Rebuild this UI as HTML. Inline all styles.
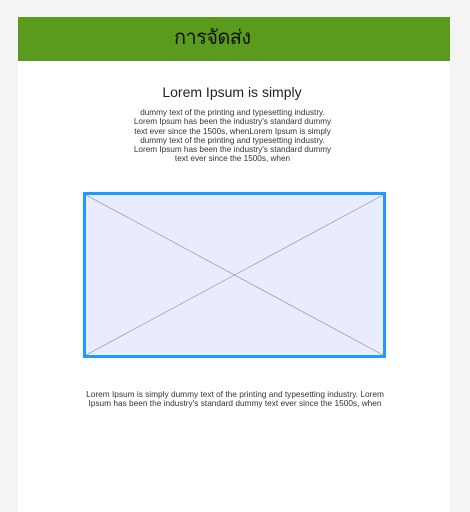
<!DOCTYPE html>
<html><head><meta charset="utf-8"><style>
body{margin:0;width:470px;height:512px;background:#f4f4f4;font-family:"Liberation Sans",sans-serif;position:relative;overflow:hidden}
.panel{position:absolute;left:18px;top:17px;width:432px;height:495px;background:#fff}
.hdr{position:absolute;left:18px;top:17px;width:432px;height:44px;background:#5a9a1c}
.ttl{position:absolute;left:174px;top:24px;font-size:20px;color:#111;font-family:"Liberation Sans","Noto Sans CJK SC",sans-serif;line-height:28px;letter-spacing:-0.6px}
.h{position:absolute;left:0;width:470px;top:84px;text-align:center;font-size:14px;color:#222;transform:translateX(-3px)}
.p{position:absolute;left:100px;width:265px;top:108px;text-align:center;font-size:8.2px;line-height:9.3px;color:#333;white-space:nowrap}
.b{position:absolute;left:40px;width:390px;top:390px;text-align:center;font-size:8.3px;line-height:9.3px;color:#333;white-space:nowrap}
svg{position:absolute;left:83px;top:192px}
</style></head><body>
<div class="panel"></div>
<div class="hdr"></div>
<div class="ttl">การจัดส่ง</div>
<div class="h">Lorem Ipsum is simply</div>
<div class="p">dummy text of the printing and typesetting industry.<br>Lorem Ipsum has been the industry's standard dummy<br>text ever since the 1500s, whenLorem Ipsum is simply<br>dummy text of the printing and typesetting industry.<br>Lorem Ipsum has been the industry's standard dummy<br>text ever since the 1500s, when</div>
<svg width="303" height="166"><rect x="1.5" y="1.5" width="300" height="163" fill="#e8ecfc" stroke="#1e9bff" stroke-width="3"/><line x1="3" y1="3" x2="300" y2="163" stroke="#888" stroke-width="0.6"/><line x1="300" y1="3" x2="3" y2="163" stroke="#888" stroke-width="0.6"/></svg>
<div class="b">Lorem Ipsum is simply dummy text of the printing and typesetting industry. Lorem<br>Ipsum has been the industry's standard dummy text ever since the 1500s, when</div>
</body></html>
